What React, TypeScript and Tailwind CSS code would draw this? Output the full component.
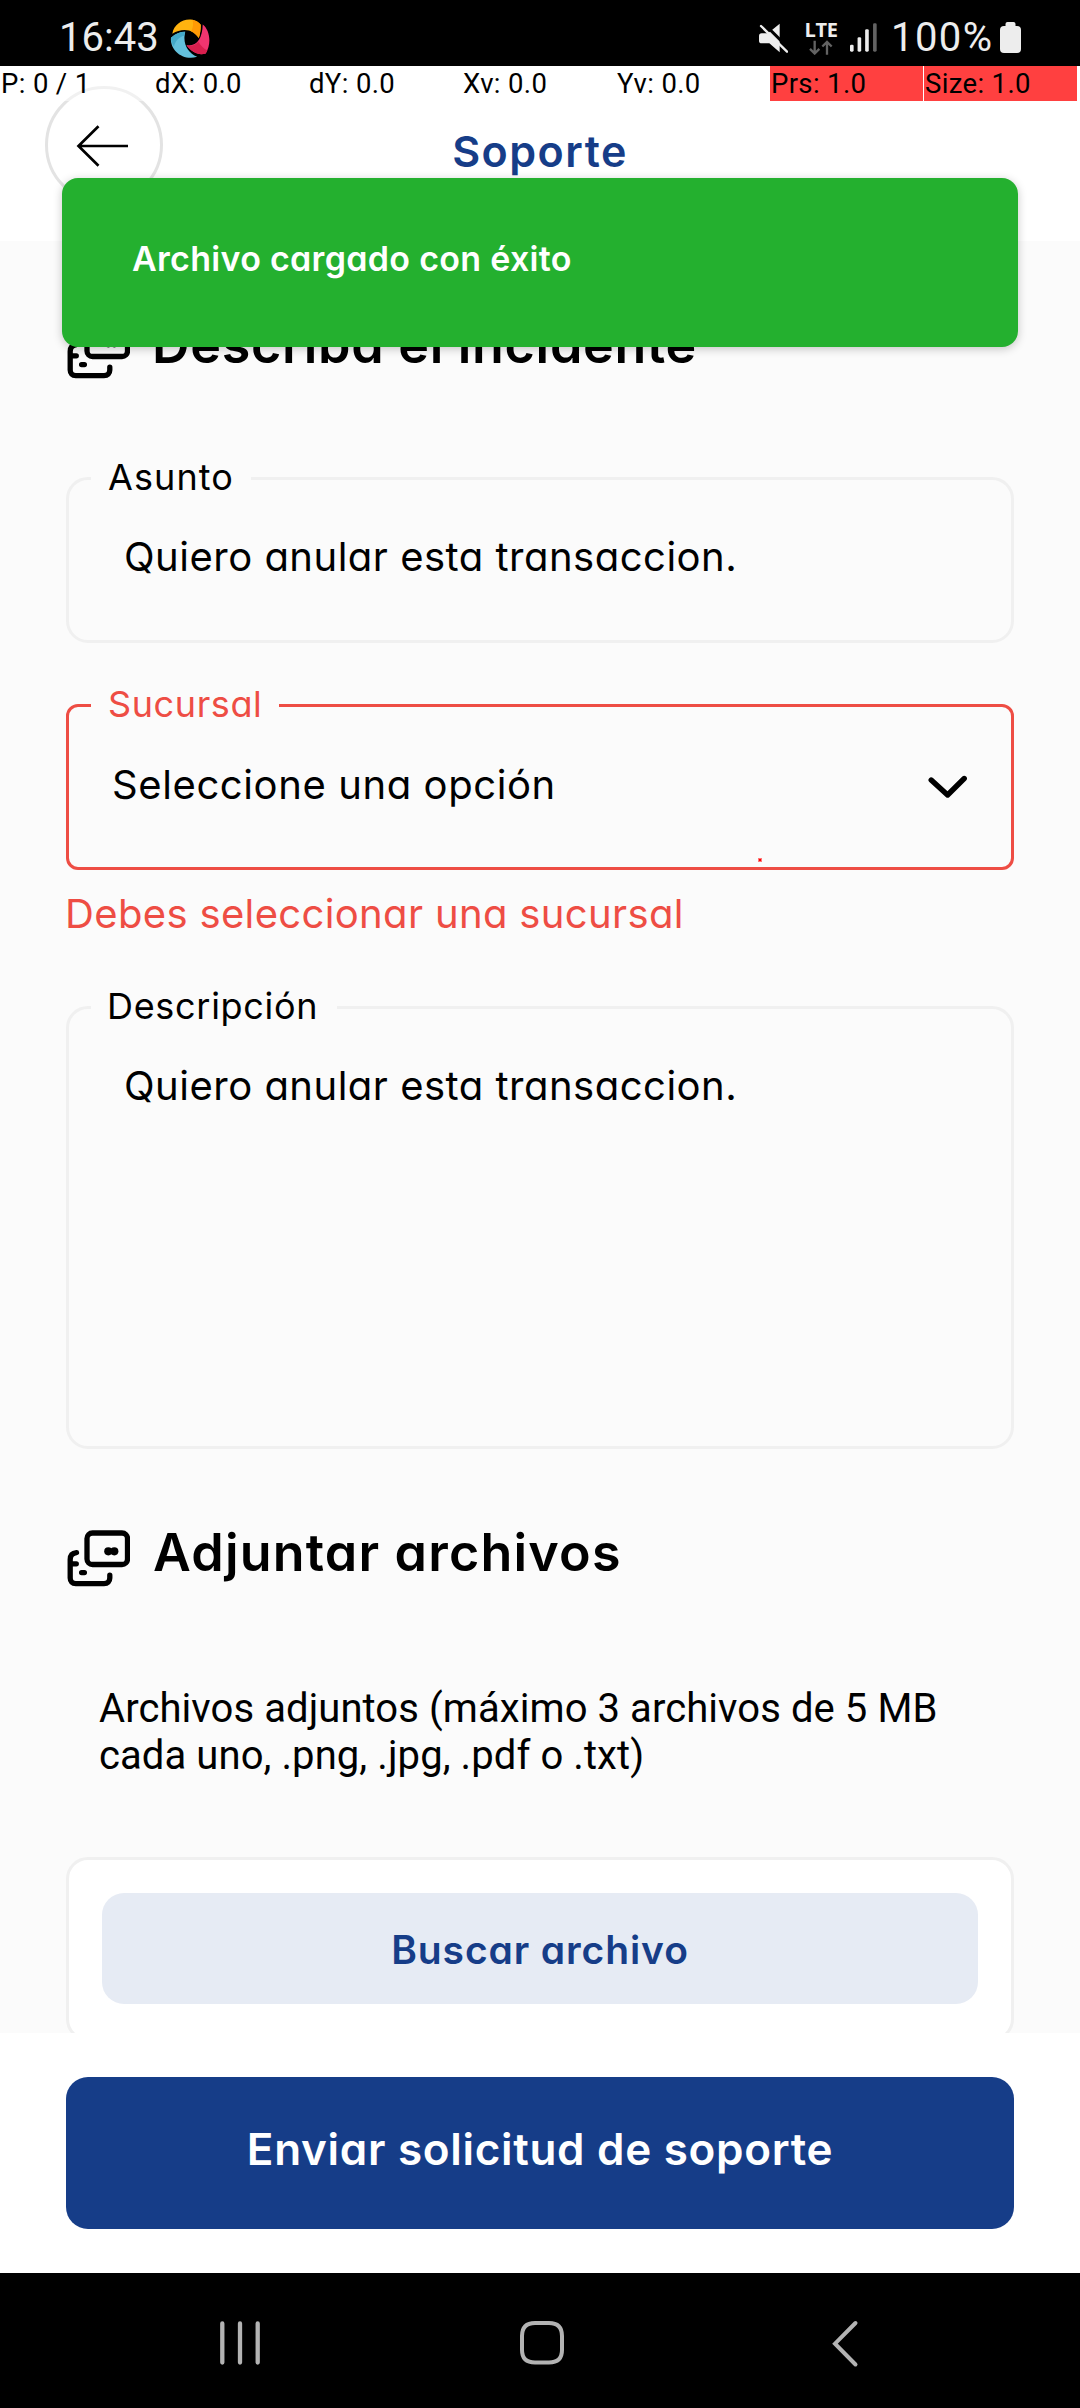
import type { ReactNode } from "react";

function AppLogo() {
  return (
    <svg viewBox="30 20 124 120" className="h-[40px] w-[41px]">
      <path d="M37 67C42 38 70 20 98 25C108 27 117 33 123 40C123 56 121 68 117 80C103 54 68 48 37 67Z" fill="#ffb30f" />
      <path d="M98 25C108 27 117 33 123 40C123 56 121 68 117 80C109 69 102 64 94 60C101 46 101 36 98 25Z" fill="#ff9a05" />
      <path d="M129 39C150 55 157 95 138 127C116 133 96 124 80 102C112 106 128 80 129 39Z" fill="#f0356f" />
      <path d="M80 102C96 106 108 100 116 91C124 104 132 112 143 118L138 127C116 133 96 124 80 102Z" fill="#d81f4e" />
      <path d="M76 61C60 61 47 67 33 79C29 112 64 150 112 137C84 125 67 97 76 61Z" fill="#63c0dc" />
      <path d="M76 61C60 61 47 67 33 79C33 90 37 98 42 106C46 88 57 77 73 73Z" fill="#45aac9" />
    </svg>
  );
}

function StatusBar() {
  return (
    <div className="flex h-[66px] shrink-0 items-center bg-black pr-[59px] pl-[59px] pt-[9px] font-[Roboto,sans-serif] text-[#ededed]">
      <span className="w-[111px] text-[40px] leading-[46px]">16:43</span>
      <AppLogo />
      <div className="ml-auto flex items-center">
        <svg viewBox="52 35 90 90" className="h-[30px] w-[30px]">
          <path d="M55 74Q55 66 63 66H82L117 37V123L86 96H63Q55 96 55 88Z" fill="#ededed" />
          <path d="M66 33L148 115" stroke="#000" strokeWidth="9" />
          <path d="M61 44L139 121" stroke="#ededed" strokeWidth="7" strokeLinecap="round" />
        </svg>
        <div className="ml-[16px] flex w-[34px] flex-col items-center">
          <span className="text-[20px] leading-[18px] font-bold tracking-[-0.4px] font-['Open_Sans',sans-serif]">LTE</span>
          <svg viewBox="205 86 72 44" className="mt-[1px] h-[15px] w-[24px]" fill="none" stroke="#636363" strokeWidth="7">
            <path d="M222 88V126M208 112L222 126L236 112M259 130V91M245 105L259 91L273 105" />
          </svg>
        </div>
        <svg viewBox="330 36 82 88" className="ml-[12px] h-[29px] w-[27px]" fill="#ededed">
          <rect x="330" y="102" width="11" height="21" rx="4" />
          <rect x="353" y="79" width="11" height="44" rx="4" />
          <rect x="376" y="55" width="11" height="68" rx="4" />
          <rect x="400" y="37" width="11" height="86" rx="4" fill="#636363" />
        </svg>
        <span className="ml-[14px] w-[109px] text-[40px] leading-[46px] tracking-[1.4px]">100%</span>
        <svg viewBox="0 0 21 31" className="h-[31px] w-[21px]" fill="#ededed">
          <rect x="5.5" y="0" width="10" height="8" rx="2" />
          <rect x="0" y="4" width="21" height="27" rx="4" />
        </svg>
      </div>
    </div>
  );
}

const touchReadings = ["P: 0 / 1", "dX: 0.0", "dY: 0.0", "Xv: 0.0", "Yv: 0.0"];
const touchAlerts = ["Prs: 1.0", "Size: 1.0"];

function TouchBar() {
  return (
    <div className="absolute top-[66px] left-0 grid h-[35px] w-[1077px] grid-cols-7 gap-px font-[Roboto,sans-serif] text-[27.5px] leading-[36px] tracking-[0.35px] text-black">
      {touchReadings.map((t) => (
        <span key={t} className="h-[35px] bg-white/50 pl-px">{t}</span>
      ))}
      {touchAlerts.map((t) => (
        <span key={t} className="h-[35px] bg-[#ff4040] pl-px">{t}</span>
      ))}
    </div>
  );
}

function CardsIcon() {
  return (
    <svg viewBox="66 1528 64 60" className="h-[60px] w-[64px] shrink-0" fill="none" stroke="#000" strokeWidth="5.3" strokeLinecap="round">
      <rect x="87" y="1533" width="40.5" height="31.5" rx="5.5" />
      <path d="M76.5 1552.6C72.5 1553 70.2 1555.5 70.2 1559.5V1578C70.2 1581.5 72.3 1583.6 75.8 1583.6H104C107.7 1583.6 109.8 1581.5 109.8 1578V1575.2" />
      <path d="M71 1563.8H76.3M81.6 1572.6H84.4" />
      <circle cx="108.3" cy="1551.3" r="4.1" fill="#000" stroke="none" />
      <circle cx="114.3" cy="1551.3" r="4.1" fill="#000" stroke="none" />
    </svg>
  );
}

function Heading({ className, children }: { className: string; children: ReactNode }) {
  return (
    <div className="flex h-[60px] shrink-0 items-start">
      <CardsIcon />
      <h2 className={`text-[52px] leading-[50px] font-semibold whitespace-nowrap ${className}`}>{children}</h2>
    </div>
  );
}

function Field({ label, box, labelBox, children }: { label: string; box: string; labelBox: string; children: ReactNode }) {
  return (
    <div className={`relative flex shrink-0 items-start border-[3px] ${box}`}>
      <span className={`absolute top-[-23px] left-[22px] bg-[#fbfbfb] text-[36px] leading-[40px] whitespace-nowrap ${labelBox}`}>{label}</span>
      {children}
    </div>
  );
}

export default function App() {
  return (
    <div className="relative flex h-[2408px] w-[1080px] flex-col overflow-hidden bg-white font-[Inter,sans-serif] text-black [font-feature-settings:'cv11']">
      <StatusBar />

      <header className="flex h-[175px] shrink-0 items-start justify-between bg-white px-[45px] pt-[20px]">
        <button className="flex size-[118px] items-center justify-center rounded-full border-[3px] border-[#e3e3e3]">
          <svg viewBox="76 124 54 44" className="mt-[1px] mr-[3px] h-[44px] w-[54px]" fill="none" stroke="#000" strokeWidth="2.7">
            <path d="M128 146H78.500M98.500 126.300L78.500 146L98.500 165.700" />
          </svg>
        </button>
        <h1 className="pt-[35px] text-[43px] leading-[60px] font-semibold tracking-[1.5px] text-[#163d88]">Soporte</h1>
        <div className="w-[118px]" />
      </header>

      <main className="flex h-[1792px] shrink-0 flex-col overflow-hidden bg-[#fbfbfb] px-[66px] pt-[79px]">
        <Heading className="ml-[22px] tracking-[0.7px]">Describa el incidente</Heading>

        <div className="h-[97px] shrink-0" />
        <Field label="Asunto" box="h-[166px] rounded-[22px] border-[#f0f0f0]" labelBox="w-[160px] pl-[17px] tracking-[1.1px]">
          <span className="pt-[47px] pl-[55px] text-[40px] leading-[60px] tracking-[0.5px]">Quiero anular esta transaccion.</span>
        </Field>

        <div className="h-[61px] shrink-0" />
        <Field label="Sucursal" box="h-[166px] rounded-[12px] border-[#ee4d44]" labelBox="w-[188px] pl-[17px] tracking-[0.6px] text-[#ee4d44]">
          <span className="pt-[48px] pl-[43px] text-[40px] leading-[60px] tracking-[0.6px]">Seleccione una opción</span>
          <svg viewBox="928 775 40 24" className="mt-[68px] mr-[43px] ml-auto h-[24px] w-[40px]" fill="none" stroke="#000" strokeWidth="5.4" strokeLinecap="round" strokeLinejoin="round">
            <path d="M931.2 780L947.600 795L964.200 778.500" />
          </svg>
          <span className="absolute top-[151px] left-[689px] size-[4px] border border-[#ff7a7a] bg-[#ff0000]" />
        </Field>
        <p className="mt-[14px] -ml-[1px] text-[40px] leading-[60px] tracking-[0.35px] text-[#ee4d44]">Debes seleccionar una sucursal</p>

        <div className="h-[62px] shrink-0" />
        <Field label="Descripción" box="h-[443px] rounded-[22px] border-[#f0f0f0]" labelBox="w-[246px] pl-[16px] tracking-[0.7px]">
          <span className="pt-[47px] pl-[55px] text-[40px] leading-[60px] tracking-[0.5px]">Quiero anular esta transaccion.</span>
        </Field>

        <div className="h-[79px] shrink-0" />
        <Heading className="ml-[23px] tracking-[1.2px]">Adjuntar archivos</Heading>

        <p className="mt-[97px] pl-[33px] font-[Roboto,sans-serif] text-[40px] leading-[47px] tracking-[0.08px]">
          Archivos adjuntos (máximo 3 archivos de 5 MB
          <br />
          cada uno, .png, .jpg, .pdf o .txt)
        </p>

        <div className="mt-[78px] h-[184px] shrink-0 rounded-[22px] border-[3px] border-[#f0f0f0] bg-white p-[33px]">
          <button className="flex h-[111px] w-full items-center justify-center rounded-[22px] bg-[#e6ebf4] pt-[4px] text-[39px] font-semibold tracking-[0.9px] text-[#163d88]">
            Buscar archivo
          </button>
        </div>
      </main>

      <footer className="h-[240px] shrink-0 bg-white px-[66px] pt-[44px]">
        <button className="flex h-[152px] w-full items-center justify-center rounded-[22px] bg-[#163d88] pb-[9px] text-[44px] font-semibold tracking-[0.7px] text-white">
          Enviar solicitud de soporte
        </button>
      </footer>

      <nav className="flex h-[135px] shrink-0 items-start justify-between bg-black pt-[47px] pr-[221px] pl-[219px]">
        <svg viewBox="219 2320 42 46" className="h-[46px] w-[42px]" stroke="#b3b3b3" strokeWidth="4.3" strokeLinecap="round">
          <path d="M222.300 2323.500V2362.500M240 2323.500V2362.500M257.700 2323.500V2362.500" />
        </svg>
        <svg viewBox="519 2320 46 46" className="mr-[8px] h-[46px] w-[46px]" fill="none" stroke="#b3b3b3" strokeWidth="4">
          <path d="M535 2323H549Q562 2323 562 2336V2350Q562 2362.500 549 2362.500H535Q522 2362.500 522 2350V2336Q522 2323 535 2323Z" />
        </svg>
        <svg viewBox="831 2319 28 48" className="h-[48px] w-[28px]" fill="none" stroke="#b3b3b3" strokeWidth="4" strokeLinecap="round">
          <path d="M855.500 2322L835 2342.700L855.500 2363.500" />
        </svg>
      </nav>

      <TouchBar />

      <div className="absolute top-[178px] left-[62px] flex h-[169px] w-[956px] items-center rounded-[16px] bg-[#24b02f] pb-[9px] pl-[70px] text-[34px] font-semibold tracking-[0.3px] text-white shadow-[0_2px_10px_rgba(0,0,0,0.22)]">
        Archivo cargado con éxito
      </div>
    </div>
  );
}
